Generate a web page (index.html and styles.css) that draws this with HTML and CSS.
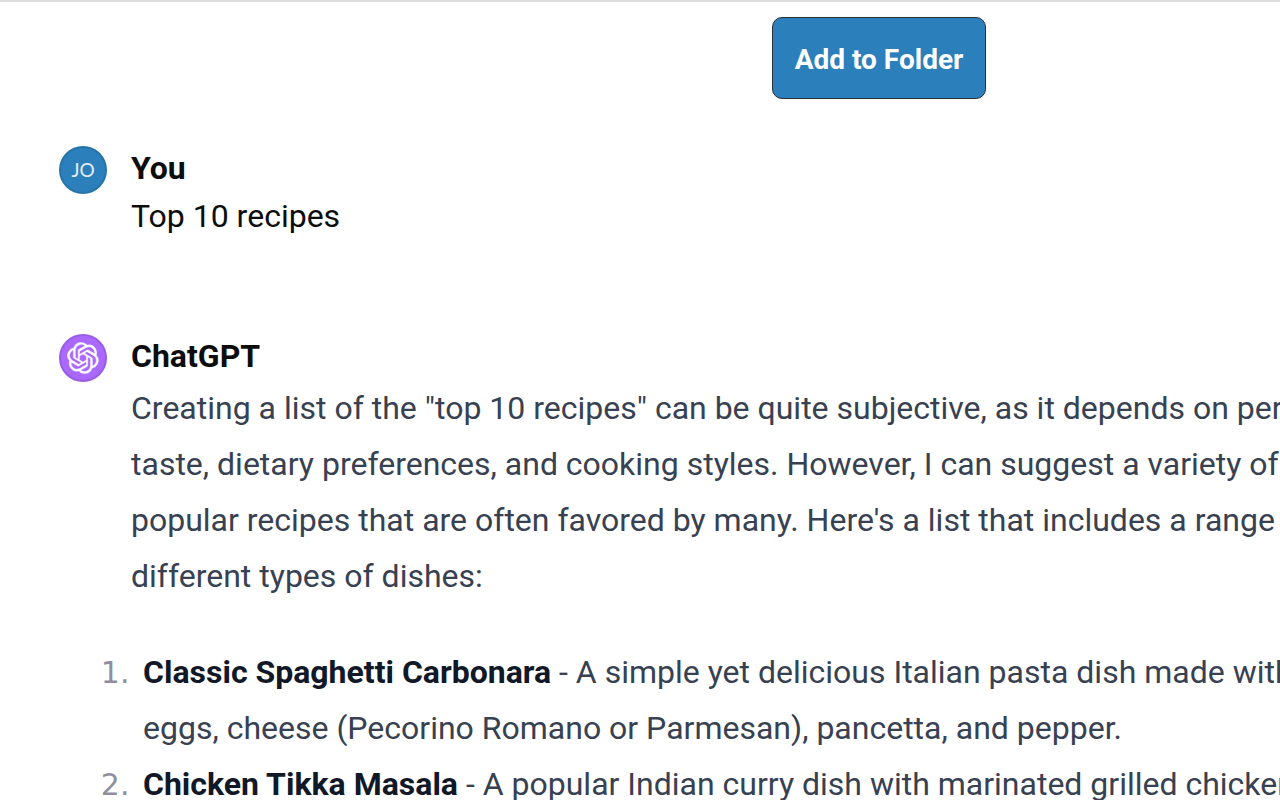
FILE: index.html
```html
<!DOCTYPE html>
<html lang="en">

<head>
    <meta charset="UTF-8">
    <meta name="viewport" content="width=device-width, initial-scale=1.0">
    <title>Top 10 recipes</title>
    <link rel="stylesheet" href="styles.css">
</head>

<body>
    <header class="toolbar">
        <button type="button">Add to Folder</button>
    </header>
    <main class="chat">
        <section class="message">
            <span class="avatar user">JO</span>
            <div class="info">
                <h2 class="name">You</h2>
                <p class="question">Top 10 recipes</p>
            </div>
        </section>
        <section class="message">
            <span class="avatar bot">
                <svg width="32" height="32" viewBox="0 0 41 41" fill="currentColor" stroke="currentColor" stroke-width="0.5" aria-hidden="true">
                    <path d="M37.532 16.87a9.963 9.963 0 0 0-.856-8.184 10.078 10.078 0 0 0-10.855-4.835A9.964 9.964 0 0 0 18.306.5a10.079 10.079 0 0 0-9.614 6.977 9.967 9.967 0 0 0-6.664 4.834 10.08 10.08 0 0 0 1.24 11.817 9.965 9.965 0 0 0 .856 8.185 10.079 10.079 0 0 0 10.855 4.835 9.965 9.965 0 0 0 7.516 3.35 10.078 10.078 0 0 0 9.617-6.981 9.967 9.967 0 0 0 6.663-4.834 10.079 10.079 0 0 0-1.243-11.813zM22.498 37.886a7.474 7.474 0 0 1-4.799-1.735c.061-.033.168-.091.237-.134l7.964-4.6a1.294 1.294 0 0 0 .655-1.134V19.054l3.366 1.944a.12.12 0 0 1 .066.092v9.299a7.505 7.505 0 0 1-7.49 7.496zM6.392 31.006a7.471 7.471 0 0 1-.894-5.023c.06.036.162.099.237.141l7.964 4.6a1.297 1.297 0 0 0 1.308 0l9.724-5.614v3.888a.12.12 0 0 1-.048.103l-8.051 4.649a7.504 7.504 0 0 1-10.24-2.744zM4.297 13.62A7.469 7.469 0 0 1 8.2 10.333c0 .068-.004.19-.004.274v9.201a1.294 1.294 0 0 0 .654 1.132l9.723 5.614-3.366 1.944a.12.12 0 0 1-.114.01L7.04 23.856a7.504 7.504 0 0 1-2.743-10.237zm27.658 6.437l-9.724-5.615 3.367-1.943a.121.121 0 0 1 .113-.01l8.052 4.648a7.498 7.498 0 0 1-1.158 13.528v-9.476a1.293 1.293 0 0 0-.65-1.132zm3.35-5.043c-.059-.037-.162-.099-.236-.141l-7.965-4.6a1.298 1.298 0 0 0-1.308 0l-9.723 5.614v-3.888a.12.12 0 0 1 .048-.103l8.05-4.645a7.497 7.497 0 0 1 11.135 7.763zm-21.063 6.929l-3.367-1.944a.12.12 0 0 1-.065-.092v-9.299a7.497 7.497 0 0 1 12.293-5.756 6.94 6.94 0 0 0-.236.134l-7.965 4.6a1.294 1.294 0 0 0-.654 1.132l-.006 11.225zm1.829-3.943l4.33-2.501 4.332 2.5v5l-4.331 2.5-4.331-2.5V18z"/>
                </svg>
            </span>
            <div class="info">
                <h2 class="name">ChatGPT</h2>
                <div class="answer">
                    <p>Creating a list of the "top 10 recipes" can be quite subjective, as it depends on personal<br>
                        taste, dietary preferences, and cooking styles. However, I can suggest a variety of<br>
                        popular recipes that are often favored by many. Here's a list that includes a range of<br>
                        different types of dishes:</p>
                    <ol>
                        <li><strong>Classic Spaghetti Carbonara</strong> - A simple yet delicious Italian pasta dish made with<br>
                            eggs, cheese (Pecorino Romano or Parmesan), pancetta, and pepper.</li>
                        <li><strong>Chicken Tikka Masala</strong> - A popular Indian curry dish with marinated grilled chicken</li>
                    </ol>
                </div>
            </div>
        </section>
    </main>
</body>

</html>
```
FILE: styles.css
```css
* {
    box-sizing: border-box;
    margin: 0;
    padding: 0;
}

body {
    background: #fff;
    color: #0d0d0d;
    font-family: Roboto, "Liberation Sans", sans-serif;
    font-size: 32px;
    overflow: hidden;
}

.toolbar {
    display: flex;
    justify-content: center;
    border-top: 2px solid #dcdcdc;
    padding: 15px 0 0 478px;
}

.toolbar button {
    width: 214px;
    height: 82px;
    padding-top: 2px;
    background: #2b7fbb;
    color: #fff;
    border: 1px solid #2a3038;
    border-radius: 10px;
    font-family: inherit;
    font-size: 28px;
    font-weight: bold;
    white-space: nowrap;
    cursor: pointer;
}

.chat {
    display: flex;
    flex-direction: column;
    gap: 92px;
    padding: 45px 0 0 59px;
}

.message {
    display: flex;
    align-items: flex-start;
    gap: 24px;
}

.avatar {
    display: flex;
    flex-shrink: 0;
    align-items: center;
    justify-content: center;
    width: 48px;
    height: 48px;
    margin-top: 2px;
    border-radius: 50%;
    box-shadow: inset 0 0 0 2px rgba(0, 0, 0, 0.1);
    color: #fff;
}

.avatar.user {
    background: #2b80bc;
    color: #e4eef6;
    font-family: Lato, sans-serif;
    font-size: 19px;
    line-height: 18px;
}

.avatar.bot {
    background: #ab68ff;
}

.info {
    white-space: nowrap;
}

.name {
    font-size: 32px;
    line-height: 48px;
}

.question {
    line-height: 48px;
}

.answer {
    color: #374151;
    line-height: 56px;
}

.answer ol {
    margin-top: 40px;
    padding-left: 8px;
}

.answer li {
    padding-left: 4px;
}

.answer li::marker {
    color: #8e8ea0;
    font-family: "DejaVu Sans", sans-serif;
    font-size: 30px;
}

.answer strong {
    color: #111827;
}
```
